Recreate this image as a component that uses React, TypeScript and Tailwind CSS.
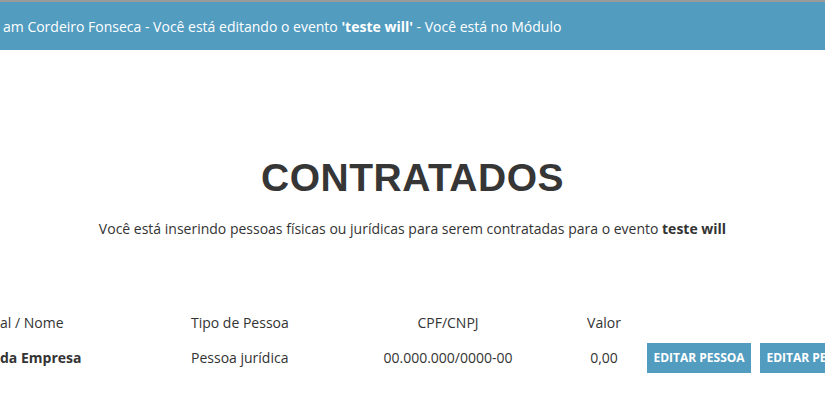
import React from 'react';

const App: React.FC = () => {
  return (
    <div className="w-[825px] h-[420px] overflow-hidden bg-white text-[#333] font-['Open_Sans',sans-serif]">
      {/* Barra superior */}
      <div className="border-t-2 border-[#9a9a9a] bg-[#519cbf] h-[50px] flex items-center pl-[3px] text-white text-[14px] whitespace-nowrap">
        am Cordeiro Fonseca - Você está editando o evento&nbsp;<b>'teste will'</b>&nbsp;- Você está no Módulo
      </div>

      {/* Título */}
      <div className="pt-[105px] flex flex-col items-center">
        <h1 className="text-[39px] leading-[46px] font-bold tracking-[0.5px] text-[#363636] font-['Liberation_Sans',sans-serif]">
          CONTRATADOS
        </h1>
        <p className="mt-[18px] text-[14px] leading-[20px]">
          Você está inserindo pessoas físicas ou jurídicas para serem contratadas para o evento <b>teste will</b>
        </p>
      </div>

      {/* Tabela */}
      <div className="mt-[70px] text-[14px] leading-[20px]">
        <div className="flex items-center h-[28px]">
          <div className="w-[191px] shrink-0">al / Nome</div>
          <div className="w-[172px] shrink-0">Tipo de Pessoa</div>
          <div className="w-[201px] shrink-0 pr-[31px] text-center">CPF/CNPJ</div>
          <div className="w-[80px] shrink-0 text-center">Valor</div>
        </div>
        <div className="flex items-center h-[42px]">
          <div className="w-[191px] shrink-0 font-bold">da Empresa</div>
          <div className="w-[172px] shrink-0">Pessoa jurídica</div>
          <div className="w-[201px] shrink-0 pr-[31px] text-center">00.000.000/0000-00</div>
          <div className="w-[80px] shrink-0 text-center">0,00</div>
          <div className="flex gap-[9px] pl-[3px] whitespace-nowrap">
            <button className="h-[30px] w-[104px] shrink-0 bg-[#519cbf] text-white text-[12px] font-bold">EDITAR PESSOA</button>
            <button className="h-[30px] w-[104px] shrink-0 bg-[#519cbf] text-white text-[12px] font-bold">EDITAR PESSOA</button>
          </div>
        </div>
      </div>
    </div>
  );
};

export default App;
